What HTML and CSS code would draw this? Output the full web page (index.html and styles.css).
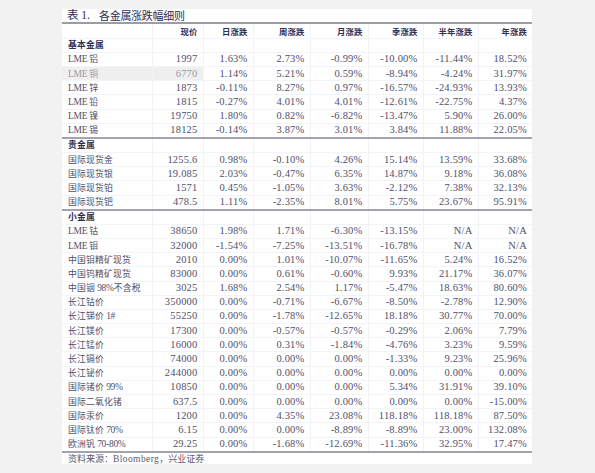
FILE: index.html
```html
<!DOCTYPE html>
<html lang="zh">
<head>
<meta charset="utf-8">
<title>表 1. 各金属涨跌幅细则</title>
<link rel="stylesheet" href="styles.css">
</head>
<body>
<div class="panel">
  <div class="title"><span class="tnum">表 1.</span><span class="tname">各金属涨跌幅细则</span></div>
  <table class="grid">
    <colgroup>
      <col class="c-name"><col class="c-price"><col class="c-d"><col class="c-w"><col class="c-m"><col class="c-q"><col class="c-h"><col class="c-y">
    </colgroup>
    <thead>
      <tr class="head"><th></th><th>现价</th><th>日涨跌</th><th>周涨跌</th><th>月涨跌</th><th>季涨跌</th><th>半年涨跌</th><th>年涨跌</th></tr>
    </thead>
    <tbody>
      <tr class="sec"><td>基本金属</td><td></td><td></td><td></td><td></td><td></td><td></td><td></td></tr>
      <tr><td><span class="lat">LME</span> 铝</td><td>1997</td><td>1.63%</td><td>2.73%</td><td>-0.99%</td><td>-10.00%</td><td>-11.44%</td><td>18.52%</td></tr>
      <tr class="hl"><td><span class="lat">LME</span> 铜</td><td>6770</td><td>1.14%</td><td>5.21%</td><td>0.59%</td><td>-8.94%</td><td>-4.24%</td><td>31.97%</td></tr>
      <tr><td><span class="lat">LME</span> 锌</td><td>1873</td><td>-0.11%</td><td>8.27%</td><td>0.97%</td><td>-16.57%</td><td>-24.93%</td><td>13.93%</td></tr>
      <tr><td><span class="lat">LME</span> 铅</td><td>1815</td><td>-0.27%</td><td>4.01%</td><td>4.01%</td><td>-12.61%</td><td>-22.75%</td><td>4.37%</td></tr>
      <tr><td><span class="lat">LME</span> 镍</td><td>19750</td><td>1.80%</td><td>0.82%</td><td>-6.82%</td><td>-13.47%</td><td>5.90%</td><td>26.00%</td></tr>
      <tr class="end"><td><span class="lat">LME</span> 锡</td><td>18125</td><td>-0.14%</td><td>3.87%</td><td>3.01%</td><td>3.84%</td><td>11.88%</td><td>22.05%</td></tr>
      <tr class="sec"><td>贵金属</td><td></td><td></td><td></td><td></td><td></td><td></td><td></td></tr>
      <tr><td>国际现货金</td><td>1255.6</td><td>0.98%</td><td>-0.10%</td><td>4.26%</td><td>15.14%</td><td>13.59%</td><td>33.68%</td></tr>
      <tr><td>国际现货银</td><td>19.085</td><td>2.03%</td><td>-0.47%</td><td>6.35%</td><td>14.87%</td><td>9.18%</td><td>36.08%</td></tr>
      <tr><td>国际现货铂</td><td>1571</td><td>0.45%</td><td>-1.05%</td><td>3.63%</td><td>-2.12%</td><td>7.38%</td><td>32.13%</td></tr>
      <tr class="end"><td>国际现货钯</td><td>478.5</td><td>1.11%</td><td>-2.35%</td><td>8.01%</td><td>5.75%</td><td>23.67%</td><td>95.91%</td></tr>
      <tr class="sec"><td>小金属</td><td></td><td></td><td></td><td></td><td></td><td></td><td></td></tr>
      <tr><td><span class="lat">LME</span> 钴</td><td>38650</td><td>1.98%</td><td>1.71%</td><td>-6.30%</td><td>-13.15%</td><td>N/A</td><td>N/A</td></tr>
      <tr><td><span class="lat">LME</span> 钼</td><td>32000</td><td>-1.54%</td><td>-7.25%</td><td>-13.51%</td><td>-16.78%</td><td>N/A</td><td>N/A</td></tr>
      <tr><td>中国钼精矿现货</td><td>2010</td><td>0.00%</td><td>1.01%</td><td>-10.07%</td><td>-11.65%</td><td>5.24%</td><td>16.52%</td></tr>
      <tr><td>中国钨精矿现货</td><td>83000</td><td>0.00%</td><td>0.61%</td><td>-0.60%</td><td>9.93%</td><td>21.17%</td><td>36.07%</td></tr>
      <tr><td>中国铟 <span class="lat">98%</span>不含税</td><td>3025</td><td>1.68%</td><td>2.54%</td><td>1.17%</td><td>-5.47%</td><td>18.63%</td><td>80.60%</td></tr>
      <tr><td>长江钴价</td><td>350000</td><td>0.00%</td><td>-0.71%</td><td>-6.67%</td><td>-8.50%</td><td>-2.78%</td><td>12.90%</td></tr>
      <tr><td>长江锑价 <span class="lat">1#</span></td><td>55250</td><td>0.00%</td><td>-1.78%</td><td>-12.65%</td><td>18.18%</td><td>30.77%</td><td>70.00%</td></tr>
      <tr><td>长江镁价</td><td>17300</td><td>0.00%</td><td>-0.57%</td><td>-0.57%</td><td>-0.29%</td><td>2.06%</td><td>7.79%</td></tr>
      <tr><td>长江锰价</td><td>16000</td><td>0.00%</td><td>0.31%</td><td>-1.84%</td><td>-4.76%</td><td>3.23%</td><td>9.59%</td></tr>
      <tr><td>长江镉价</td><td>74000</td><td>0.00%</td><td>0.00%</td><td>0.00%</td><td>-1.33%</td><td>9.23%</td><td>25.96%</td></tr>
      <tr><td>长江铋价</td><td>244000</td><td>0.00%</td><td>0.00%</td><td>0.00%</td><td>0.00%</td><td>0.00%</td><td>0.00%</td></tr>
      <tr><td>国际锗价 <span class="lat">99%</span></td><td>10850</td><td>0.00%</td><td>0.00%</td><td>0.00%</td><td>5.34%</td><td>31.91%</td><td>39.10%</td></tr>
      <tr><td>国际二氧化锗</td><td>637.5</td><td>0.00%</td><td>0.00%</td><td>0.00%</td><td>0.00%</td><td>0.00%</td><td>-15.00%</td></tr>
      <tr><td>国际汞价</td><td>1200</td><td>0.00%</td><td>4.35%</td><td>23.08%</td><td>118.18%</td><td>118.18%</td><td>87.50%</td></tr>
      <tr><td>国际钛价 <span class="lat">70%</span></td><td>6.15</td><td>0.00%</td><td>0.00%</td><td>-8.89%</td><td>-8.89%</td><td>23.00%</td><td>132.08%</td></tr>
      <tr class="end"><td>欧洲钒 <span class="lat">70-80%</span></td><td>29.25</td><td>0.00%</td><td>-1.68%</td><td>-12.69%</td><td>-11.36%</td><td>32.95%</td><td>17.47%</td></tr>
    </tbody>
  </table>
  <div class="source">资料来源：<span class="lat">Bloomberg</span>，兴业证券</div>
</div>
</body>
</html>
```
FILE: styles.css
```css
html, body {
  margin: 0;
  padding: 0;
}
body {
  background: #f2f2f2;
  font-family: "Liberation Serif", "Noto Sans CJK SC", serif;
  color: #50506c;
}
.panel {
  margin: 9px 0 0 62px;
  width: 470px;
  background: #ffffff;
}
.title {
  height: 13px;
  line-height: 13px;
  border-bottom: 2px solid #9c9ca6;
  padding-left: 5px;
  color: #2e2e58;
  font-family: "Noto Sans CJK SC", sans-serif;
  font-size: 11px;
  display: flex;
  gap: 9px;
  align-items: flex-end;
}
.title .tnum {
  font-family: "Liberation Serif", "Noto Sans CJK SC", serif;
  font-size: 11.5px;
}
.title .tname {
  letter-spacing: -0.3px;
}
.grid {
  width: 470px;
  border-collapse: collapse;
  table-layout: fixed;
}
.c-name { width: 90px; }
.c-price { width: 51px; }
.c-d { width: 50px; }
.c-w { width: 57px; }
.c-m { width: 58px; }
.c-q { width: 55px; }
.c-h { width: 55px; }
.c-y { width: 54px; }
.grid tr {
  height: 14.2px;
}
.grid th, .grid td {
  height: 13.1px;
  padding: 0 5px 0 0;
  line-height: 12px;
  vertical-align: middle;
  text-align: right;
  white-space: nowrap;
  overflow: hidden;
  border-left: 1px solid #f1f2f6;
  border-bottom: 1px solid #f3f4f7;
  font-size: 10.5px;
  font-weight: normal;
  letter-spacing: 0.2px;
}
.grid th:first-child, .grid td:first-child {
  border-left: none;
  text-align: left;
  padding-left: 6px;
  font-family: "Noto Sans CJK SC", sans-serif;
  font-size: 8.8px;
  letter-spacing: 0.2px;
}
.grid .head th {
  font-family: "Noto Sans CJK SC", sans-serif;
  font-weight: bold;
  font-size: 8.3px;
  color: #2f2f55;
}
.grid .sec td:first-child {
  font-weight: bold;
  color: #2f2f55;
}
.lat {
  font-family: "Liberation Serif", serif;
  font-size: 9.5px;
  line-height: 10px;
  letter-spacing: -0.3px;
}
.grid tr.end td {
  border-bottom: 2px solid #a3a3b0;
}
.grid tr.hl td:nth-child(1), .grid tr.hl td:nth-child(2) {
  background: #efefef;
  color: #9a9aa6;
}
.source {
  padding: 0 0 0 6px;
  height: 11px;
  line-height: 11px;
  font-family: "Noto Sans CJK SC", sans-serif;
  font-size: 9px;
  color: #5a5a72;
}
.source .lat {
  font-size: 9.5px;
  letter-spacing: 0.4px;
}
```
